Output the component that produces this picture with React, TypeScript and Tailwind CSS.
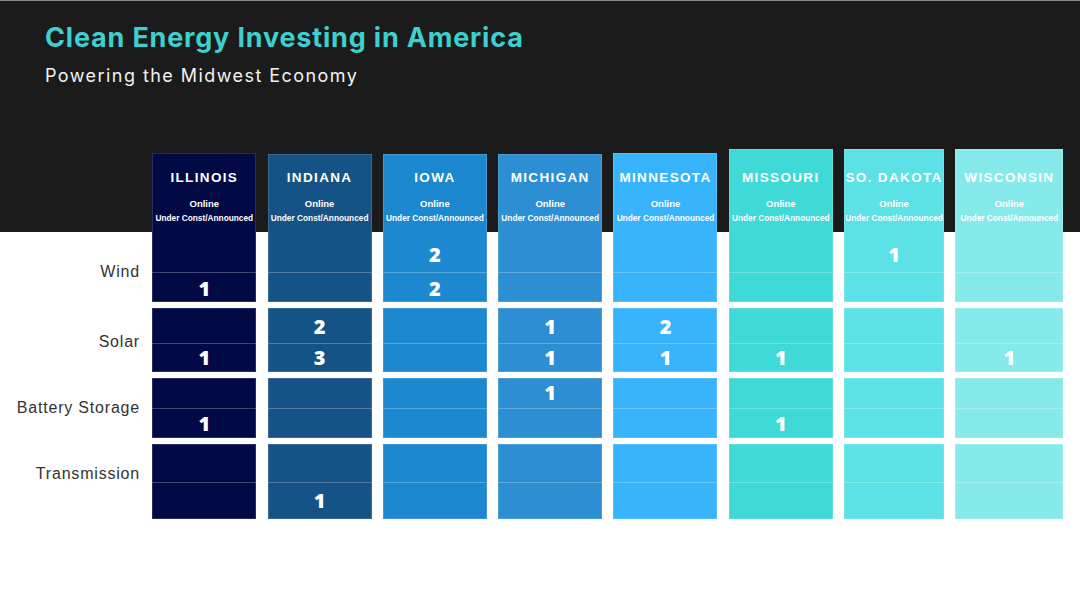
const STATES = [
  { name: 'ILLINOIS', color: 'bg-[#010a45]', offset: 'mt-[4px]', headH: 'h-[79px]', width: 'w-[104px]', v: ['', '1', '', '1', '', '1', '', ''] },
  { name: 'INDIANA', color: 'bg-[#155285]', offset: 'mt-[5px]', headH: 'h-[78px]', width: 'w-[104px]', v: ['', '', '2', '3', '', '', '', '1'] },
  { name: 'IOWA', color: 'bg-[#1b88cf]', offset: 'mt-[5px]', headH: 'h-[78px]', width: 'w-[104px]', v: ['2', '2', '', '', '', '', '', ''] },
  { name: 'MICHIGAN', color: 'bg-[#2c8fd3]', offset: 'mt-[5px]', headH: 'h-[78px]', width: 'w-[104px]', v: ['', '', '1', '1', '1', '', '', ''] },
  { name: 'MINNESOTA', color: 'bg-[#37b4fc]', offset: 'mt-[4px]', headH: 'h-[79px]', width: 'w-[104px]', v: ['', '', '2', '1', '', '', '', ''] },
  { name: 'MISSOURI', color: 'bg-[#3fdad7]', offset: 'mt-0', headH: 'h-[83px]', width: 'w-[104px]', v: ['', '', '', '1', '', '1', '', ''] },
  { name: 'SO. DAKOTA', color: 'bg-[#5ce2e6]', offset: 'mt-0', headH: 'h-[83px]', width: 'w-[100px]', v: ['1', '', '', '', '', '', '', ''] },
  { name: 'WISCONSIN', color: 'bg-[#87eaea]', offset: 'mt-0', headH: 'h-[83px]', width: 'w-[108px]', v: ['', '', '', '1', '', '', '', ''] },
]

// each category block: online cell height, under-const cell height, label padding
const ROWS = [
  { label: 'Wind', top: 'h-[40px] pt-[6px]', bottom: 'h-[30px] pt-[2px]', labelPad: 'pt-[30px]', height: 'h-[70px]' },
  { label: 'Solar', top: 'h-[35px] pt-[2px]', bottom: 'h-[29px]', labelPad: 'pt-[24px]', height: 'h-[64px]' },
  { label: 'Battery Storage', top: 'h-[30px]', bottom: 'h-[30px]', labelPad: 'pt-[20px]', height: 'h-[60px]' },
  { label: 'Transmission', top: 'h-[38px]', bottom: 'h-[37px]', labelPad: 'pt-[20px]', height: 'h-[75px]' },
]

function Cell({ value, h, divider }: { value: string; h: string; divider?: boolean }) {
  return (
    <div
      className={`${h} box-border flex items-center justify-center ${divider ? 'border-t border-white/25' : ''}`}
    >
      <span className="font-['Open_Sans','Liberation_Sans',sans-serif] text-[20px] leading-none font-extrabold text-white">
        {value}
      </span>
    </div>
  )
}

function StateColumn({ s }: { s: (typeof STATES)[number] }) {
  return (
    <div className={`${s.width} ${s.offset} flex shrink-0 flex-col gap-[6px] font-['Liberation_Sans',sans-serif] text-white`}>
      {ROWS.map((row, i) => (
        <div key={row.label} className={`${s.color} flex flex-col ring-1 ring-white/15 ring-inset`}>
          {/* Header sits on top of the wind block */}
          {i === 0 && (
            <div className={`${s.headH} flex flex-col items-center justify-end pb-[8px]`}>
              <div className="mb-[12px] text-[13.5px] leading-[16px] font-bold tracking-[0.1em] whitespace-nowrap">
                {s.name}
              </div>
              <div className="mb-[3px] text-[9.5px] leading-[12px] font-bold">Online</div>
              <div className="text-[8.3px] leading-[11px] font-bold whitespace-nowrap">Under Const/Announced</div>
            </div>
          )}
          <Cell value={s.v[i * 2]} h={row.top} />
          <Cell value={s.v[i * 2 + 1]} h={row.bottom} divider />
        </div>
      ))}
    </div>
  )
}

export default function App() {
  return (
    <div className="flex h-[607px] w-[1080px] flex-col overflow-hidden bg-[linear-gradient(to_bottom,#1b1b1b_232px,#ffffff_232px)] font-['Liberation_Sans',sans-serif]">
      <div className="h-px bg-[#8c8c8c]" />

      {/* Title */}
      <div className="h-[148px] pt-[21px] pl-[45px]">
        <h1 className="font-['Inter','Liberation_Sans',sans-serif] text-[27px] leading-[32px] font-bold tracking-[0.03em] text-[#3ecfcf]">
          Clean Energy Investing in America
        </h1>
        <p className="mt-[11px] font-['Inter','Liberation_Sans',sans-serif] text-[18px] leading-[22px] tracking-[0.08em] text-[#f2f2f2]">
          Powering the Midwest Economy
        </p>
      </div>

      {/* Table */}
      <div className="flex items-start gap-[11.3px]">
        <div className="flex w-[141px] shrink-0 flex-col gap-[6px] pt-[83px] pr-px text-right">
          {ROWS.map((row) => (
            <div key={row.label} className={`${row.height} ${row.labelPad}`}>
              <div className="text-[16px] leading-[20px] tracking-[0.05em] whitespace-nowrap text-[#333333]">
                {row.label}
              </div>
            </div>
          ))}
        </div>
        {STATES.map((s) => (
          <StateColumn key={s.name} s={s} />
        ))}
      </div>
    </div>
  )
}
